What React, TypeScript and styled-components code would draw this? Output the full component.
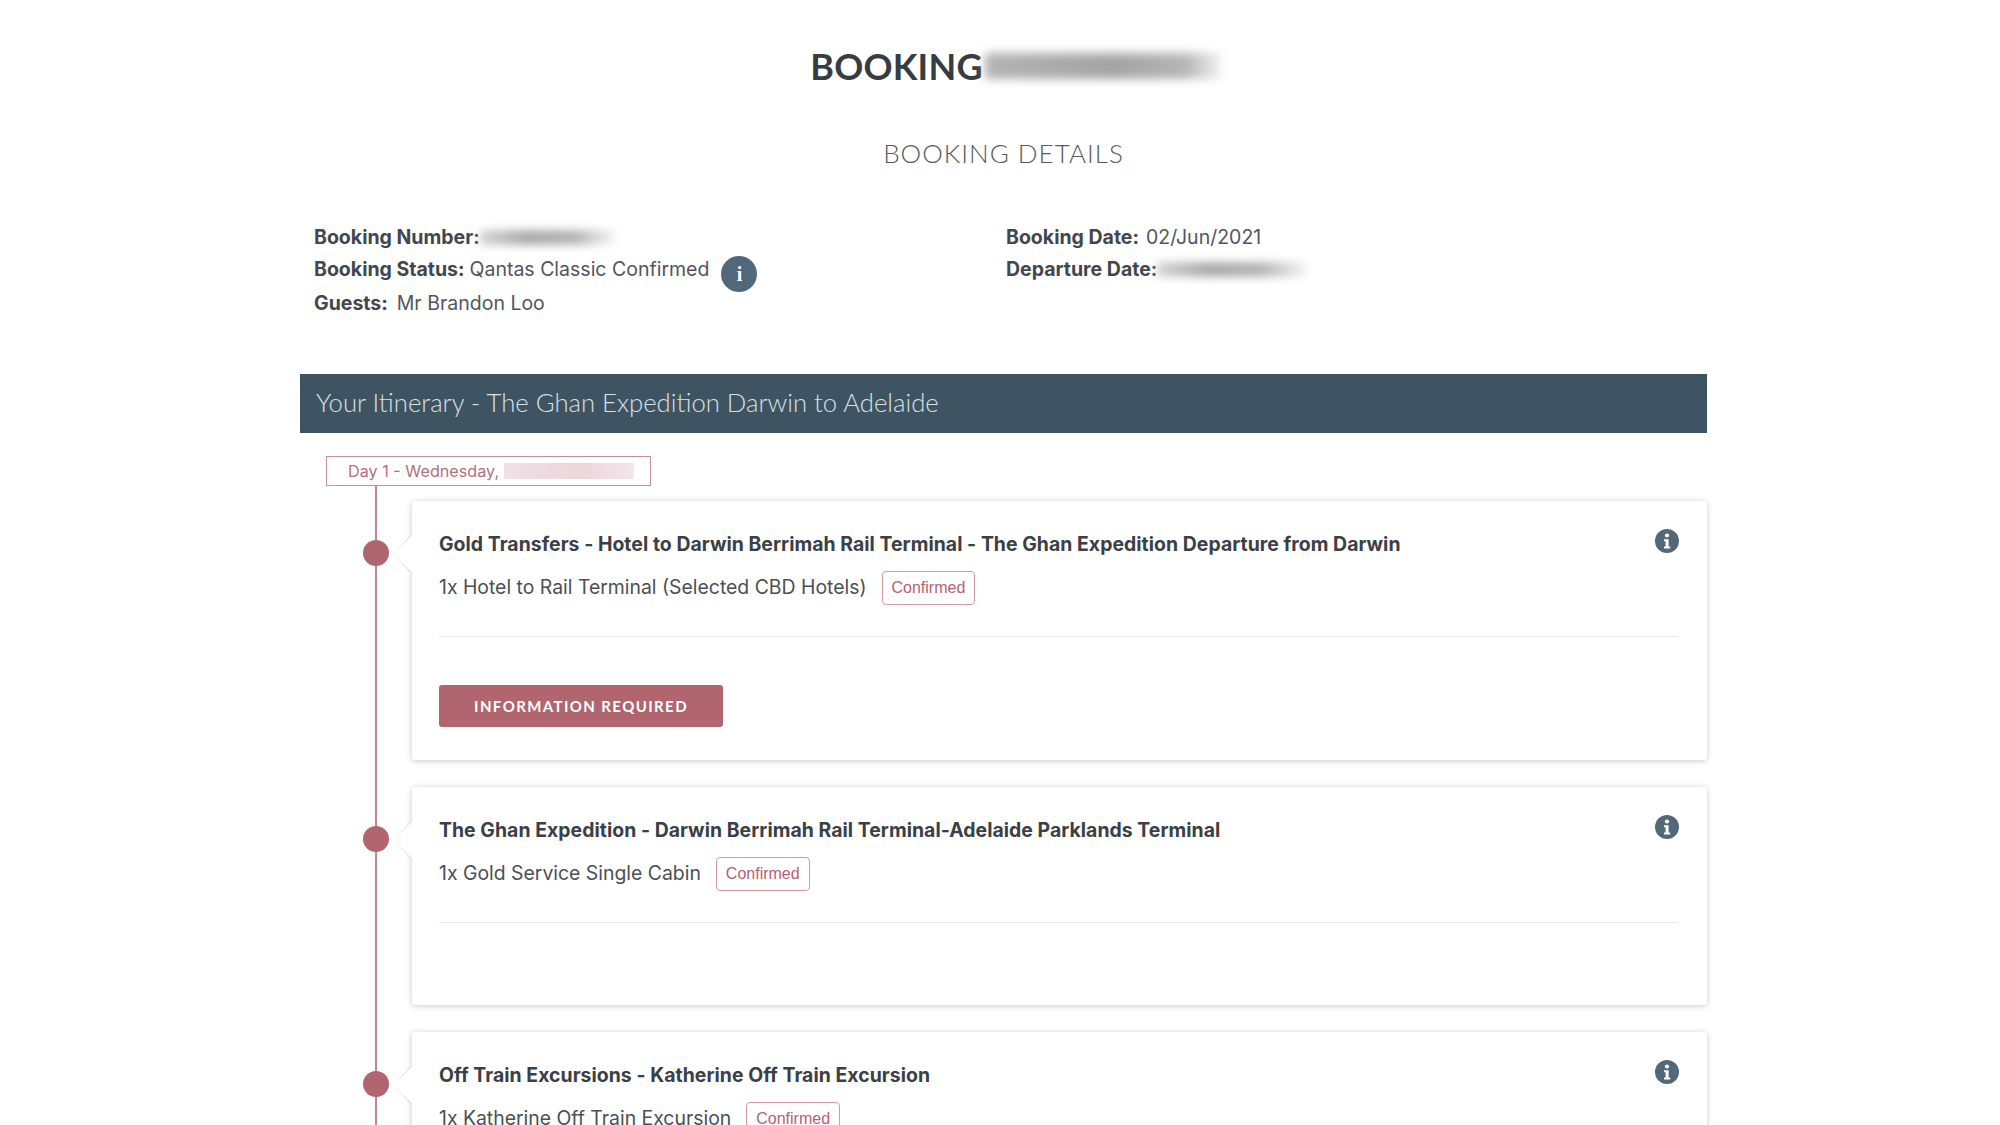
import styled, { createGlobalStyle } from 'styled-components';

const GlobalStyle = createGlobalStyle`
  html, body {
    margin: 0;
    height: 1125px;
    overflow: hidden;
    background: #fff;
    font-family: 'Inter', 'Liberation Sans', sans-serif;
    color: #41474d;
  }
`;

const Page = styled.div`
  width: 1407px;
  margin-left: 300px;
`;

const Heading = styled.h1`
  display: flex;
  justify-content: center;
  align-items: center;
  gap: 2px;
  height: 36px;
  margin: 48px 0 0;
  padding-left: 24px;
  font-family: 'Lato', sans-serif;
  font-size: 36px;
  font-weight: 700;
  color: #363c42;
  letter-spacing: 0.2px;
`;

const HeadingBlur = styled.span`
  width: 236px;
  height: 26px;
  background: linear-gradient(90deg, #b4b4b4, #a4a4a4 55%, #b6b6b6 85%, rgba(190, 190, 190, 0.2));
  filter: blur(5px);
`;

const SubHeading = styled.h2`
  margin: 53px 0 0;
  height: 32px;
  line-height: 32px;
  text-align: center;
  font-family: 'Lato', sans-serif;
  font-size: 26px;
  font-weight: 300;
  letter-spacing: 1px;
  color: #555b61;
`;

const Details = styled.div`
  display: grid;
  grid-template-columns: 692px 1fr;
  margin: 54px 0 0;
  padding-left: 14px;
  font-size: 19.5px;
`;

const Column = styled.div`
  display: flex;
  flex-direction: column;
`;

const DetailRow = styled.div<{ $height: number }>`
  display: flex;
  align-items: flex-start;
  height: ${(p) => p.$height}px;
  line-height: 28px;
`;

const Label = styled.b`
  font-weight: 700;
  color: #41474d;
`;

const Value = styled.span<{ $gap: number }>`
  margin-left: ${(p) => p.$gap}px;
  color: #50565c;
`;

const ValueBlur = styled.span<{ $width: number }>`
  width: ${(p) => p.$width}px;
  height: 15px;
  margin-top: 7px;
  background: linear-gradient(90deg, #d4d4d4, #a9a9a9 35%, #b4b4b4 70%, rgba(210, 210, 210, 0.2));
  filter: blur(4px);
`;

const StatusIcon = styled.span`
  display: inline-flex;
  align-items: center;
  justify-content: center;
  width: 36px;
  height: 36px;
  margin: 1px 0 0 12px;
  border-radius: 50%;
  background: #51687a;
  color: #fff;
  font-family: 'Liberation Serif', serif;
  font-size: 20px;
  font-weight: 700;
`;

const ItineraryBar = styled.div`
  height: 59px;
  line-height: 57px;
  margin-top: 57px;
  padding-left: 16px;
  background: #3f5463;
  color: #d9e0e4;
  font-family: 'Lato', sans-serif;
  font-size: 25.7px;
  font-weight: 300;
`;

const Timeline = styled.div`
  position: relative;
  padding: 23px 0 0 26px;

  &::before {
    content: '';
    position: absolute;
    left: 75px;
    top: 52px;
    bottom: -400px;
    width: 2px;
    background: #c48490;
  }
`;

const DayTag = styled.div`
  position: relative;
  box-sizing: border-box;
  display: flex;
  align-items: center;
  gap: 5px;
  width: 325px;
  height: 30px;
  padding-left: 21px;
  border: 1px solid #c98e99;
  font-size: 16.2px;
  color: #b0707c;
  background: #fff;
`;

const DayBlur = styled.span`
  width: 130px;
  height: 16px;
  background: linear-gradient(90deg, #f1e0e3, #ecd6da 60%, #f4e6e9);
`;

const Cards = styled.div`
  display: flex;
  flex-direction: column;
  gap: 27px;
  margin: 15px 0 0 86px;
`;

const Card = styled.article<{ $height: number }>`
  position: relative;
  box-sizing: border-box;
  height: ${(p) => p.$height}px;
  padding: 29px 29px 0 27px;
  border-radius: 3px;
  background: #fff;
  box-shadow: 0 1px 6px rgba(0, 0, 0, 0.22);

  &::before {
    content: '';
    position: absolute;
    left: -13px;
    top: 40px;
    width: 26px;
    height: 26px;
    background: #fff;
    transform: rotate(45deg);
    box-shadow: -1px 1px 2px rgba(0, 0, 0, 0.12);
    clip-path: polygon(-10% -10%, 0 100%, 110% 110%, 100% 100%);
  }
`;

const Dot = styled.span`
  position: absolute;
  left: -49px;
  top: 39px;
  width: 26px;
  height: 26px;
  border-radius: 50%;
  background: #b0656f;
`;

const CardInfo = styled.svg`
  position: absolute;
  right: 28px;
  top: 28px;
  width: 24px;
  height: 24px;
`;

const CardTitle = styled.h3`
  margin: 0;
  font-size: 19.4px;
  line-height: 28px;
  font-weight: 700;
  letter-spacing: 0.05px;
  color: #3a4046;
`;

const ServiceRow = styled.div`
  display: flex;
  align-items: center;
  gap: 15px;
  margin-top: 10px;
  font-size: 19.4px;
  color: #4a5056;
`;

const Badge = styled.span`
  box-sizing: border-box;
  height: 34px;
  line-height: 32px;
  margin-top: 3px;
  padding: 0 9px;
  border: 1px solid #d39aa4;
  border-radius: 4px;
  font-family: 'Liberation Sans', sans-serif;
  font-size: 16px;
  color: #b8606f;
`;

const Divider = styled.hr`
  margin: 31px 0 0;
  border: 0;
  border-top: 1px solid #e9e9e9;
`;

const ActionButton = styled.button`
  display: block;
  width: 284px;
  height: 42px;
  margin-top: 48px;
  border: 0;
  border-radius: 3px;
  background: #b0656f;
  color: #fff;
  font-family: 'Lato', sans-serif;
  font-size: 15px;
  font-weight: 700;
  letter-spacing: 1.4px;
`;

function InfoIcon() {
  return (
    <CardInfo viewBox="0 0 24 24">
      <circle cx="12" cy="12" r="12" fill="#51687a" />
      <circle cx="12" cy="6.5" r="2.1" fill="#fff" />
      <path d="M9 10.2h4.6v7.4H15.2v2H9v-2h1.6v-5.4H9z" fill="#fff" />
    </CardInfo>
  );
}

const bookings = [
  {
    title:
      'Gold Transfers - Hotel to Darwin Berrimah Rail Terminal - The Ghan Expedition Departure from Darwin',
    service: '1x Hotel to Rail Terminal (Selected CBD Hotels)',
    height: 259,
    action: true,
  },
  {
    title:
      'The Ghan Expedition - Darwin Berrimah Rail Terminal-Adelaide Parklands Terminal',
    service: '1x Gold Service Single Cabin',
    height: 218,
    action: false,
  },
  {
    title: 'Off Train Excursions - Katherine Off Train Excursion',
    service: '1x Katherine Off Train Excursion',
    height: 218,
    action: false,
  },
];

export default function App() {
  return (
    <>
      <GlobalStyle />
      <Page>
        <Heading>
          BOOKING
          <HeadingBlur />
        </Heading>
        <SubHeading>BOOKING DETAILS</SubHeading>
        <Details>
          <Column>
            <DetailRow $height={32}>
              <Label>Booking Number:</Label>
              <ValueBlur $width={135} />
            </DetailRow>
            <DetailRow $height={34}>
              <Label>Booking Status:</Label>
              <Value $gap={5}>Qantas Classic Confirmed</Value>
              <StatusIcon>i</StatusIcon>
            </DetailRow>
            <DetailRow $height={28}>
              <Label>Guests:</Label>
              <Value $gap={9}>Mr Brandon Loo</Value>
            </DetailRow>
          </Column>
          <Column>
            <DetailRow $height={32}>
              <Label>Booking Date:</Label>
              <Value $gap={7}>02/Jun/2021</Value>
            </DetailRow>
            <DetailRow $height={34}>
              <Label>Departure Date:</Label>
              <ValueBlur $width={150} />
            </DetailRow>
          </Column>
        </Details>
        <ItineraryBar>Your Itinerary - The Ghan Expedition Darwin to Adelaide</ItineraryBar>
        <Timeline>
          <DayTag>
            Day 1 - Wednesday,
            <DayBlur />
          </DayTag>
          <Cards>
            {bookings.map((b) => (
              <Card key={b.title} $height={b.height}>
                <Dot />
                <InfoIcon />
                <CardTitle>{b.title}</CardTitle>
                <ServiceRow>
                  {b.service}
                  <Badge>Confirmed</Badge>
                </ServiceRow>
                <Divider />
                {b.action && <ActionButton>INFORMATION REQUIRED</ActionButton>}
              </Card>
            ))}
          </Cards>
        </Timeline>
      </Page>
    </>
  );
}
